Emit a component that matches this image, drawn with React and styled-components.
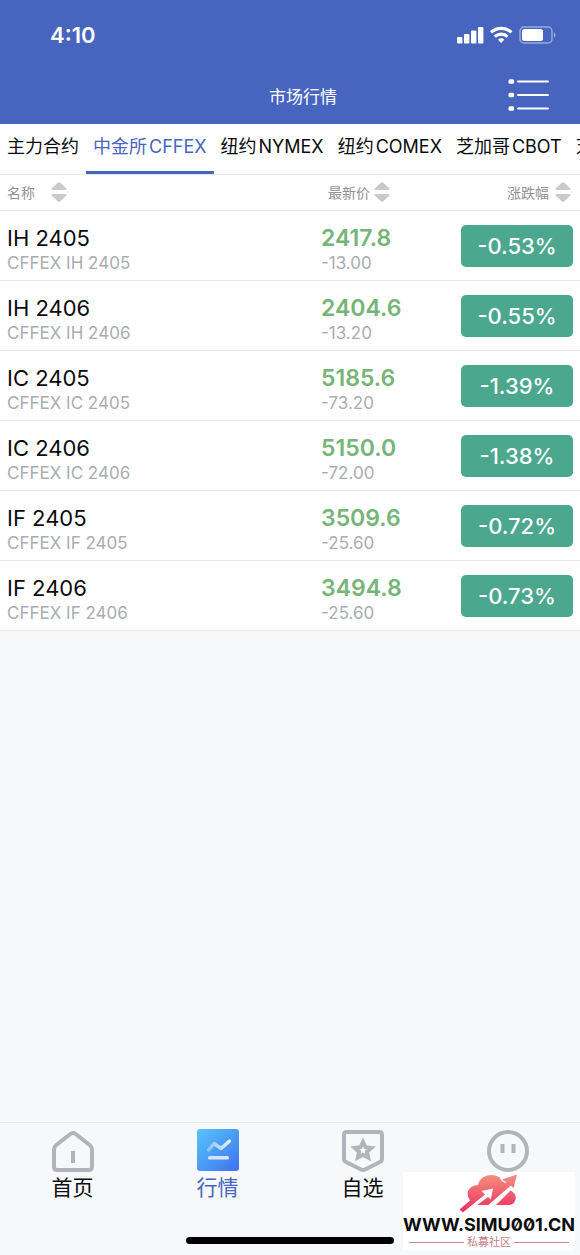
import React, { useState } from 'react'
import styled, { ThemeProvider, createGlobalStyle } from 'styled-components'

const theme = {
  colors: {
    primary: '#4765bf',
    bg: '#f7f8fa',
    white: '#ffffff',
    text: '#0b0b0d',
    muted: '#a9adb3',
    head: '#909196',
    border: '#e6e7e9',
    price: '#76b578',
    badge: '#4ba78d',
    icon: '#b2b4b9',
  },
}

const GlobalStyle = createGlobalStyle`
  * {
    box-sizing: border-box;
  }
  body {
    margin: 0;
    font-family: Inter, "Noto Sans CJK SC", sans-serif;
    color: ${theme.colors.text};
    background-color: ${theme.colors.bg};
  }
  button {
    font-family: inherit;
    color: inherit;
    background: none;
    border: 0;
    padding: 0;
    cursor: pointer;
  }
  a {
    color: inherit;
    text-decoration: none;
  }
`;

const markets = [
  { city: '主力合约' },
  { city: '中金所', code: 'CFFEX' },
  { city: '纽约', code: 'NYMEX' },
  { city: '纽约', code: 'COMEX' },
  { city: '芝加哥', code: 'CBOT' },
  { city: '芝加哥', code: 'CME' },
]

const quotes = [
  { name: 'IH 2405', price: '2417.8', diff: '-13.00', rate: '-0.53%' },
  { name: 'IH 2406', price: '2404.6', diff: '-13.20', rate: '-0.55%' },
  { name: 'IC 2405', price: '5185.6', diff: '-73.20', rate: '-1.39%' },
  { name: 'IC 2406', price: '5150.0', diff: '-72.00', rate: '-1.38%' },
  { name: 'IF 2405', price: '3509.6', diff: '-25.60', rate: '-0.72%' },
  { name: 'IF 2406', price: '3494.8', diff: '-25.60', rate: '-0.73%' },
]

const StatusIcons = () => (
  <svg width="99" height="18" viewBox="0 0 99 18" fill="#fff" aria-hidden="true">
    <rect x="0" y="11" width="5.4" height="6.4" rx="1" />
    <rect x="7" y="8" width="5.4" height="9.4" rx="1" />
    <rect x="14" y="4.5" width="5.4" height="12.900" rx="1" />
    <rect x="21" y="1" width="5.4" height="16.4" rx="1" />
    <g fill="none" stroke="#fff" strokeWidth="3.2">
      <path d="M34 6.4a15 15 0 0 1 20.4 0" />
      <path d="M37.8 10.6a9.4 9.4 0 0 1 12.8 0" />
    </g>
    <path d="M44.2 17l-3.2-3.300a4.800 4.800 0 0 1 6.400 0z" />
    <rect x="63" y="1" width="32" height="16" rx="4" fill="none" stroke="#fff" strokeOpacity="0.45" strokeWidth="1.4" />
    <rect x="65" y="3" width="21" height="12" rx="2.5" />
    <path d="M97 6.5c1.8.8 1.8 4.2 0 5z" fillOpacity="0.5" />
  </svg>
)

const ListIcon = () => (
  <svg width="42" height="34" viewBox="0 0 42 34" fill="#fff" aria-hidden="true">
    {[2, 15.5, 29].map((y) => (
      <g key={y}>
        <rect x="0.5" y={y - 0.7} width="5.6" height="4.4" rx="1.5" />
        <rect x="9" y={y + 0.4} width="32" height="2.2" rx="1" />
      </g>
    ))}
  </svg>
)

const SortIcon = () => (
  <svg width="16" height="20" viewBox="0 0 16 20" fill="#c9cad0" aria-hidden="true">
    <path d="M1.2 8Q-.3 7.4 1 6.2L6.6.8Q8 -.2 9.4.8L15 6.2Q16.300 7.400 14.800 8z" />
    <path d="M1.2 12Q-.3 12.600 1 13.800L6.600 19.200Q8 20.200 9.400 19.200L15 13.800Q16.300 12.600 14.800 12z" />
  </svg>
)

const HomeIcon = () => (
  <svg width="42" height="42" viewBox="0 0 42 42" overflow="visible" fill="none" stroke={theme.colors.icon} strokeWidth="4" aria-hidden="true">
    <path d="M2 20.500Q2 18 4 16.300L18 5.300Q21 2.800 24 5.300L38 16.300Q40 18 40 20.500V38Q40 41 37 41H5Q2 41 2 38z" />
    <path d="M21 22v12" />
  </svg>
)

const ChartIcon = () => (
  <svg width="42" height="42" viewBox="0 0 42 42" aria-hidden="true">
    <defs>
      <linearGradient id="chartBg" x1="0" y1="0" x2="1" y2="1">
        <stop offset="0" stopColor="#58c4f8" />
        <stop offset="0.5" stopColor="#4a9cf5" />
        <stop offset="1" stopColor="#4170ee" />
      </linearGradient>
      <linearGradient id="chartLine" x1="0" y1="0" x2="1" y2="0">
        <stop offset="0" stopColor="#fff" stopOpacity="0.35" />
        <stop offset="1" stopColor="#fff" stopOpacity="0.9" />
      </linearGradient>
    </defs>
    <rect width="42" height="42" rx="3" fill="url(#chartBg)" />
    <path d="M11.500 21L17 14.500L24 19.500L32.500 12" fill="none" stroke="url(#chartLine)" strokeWidth="3.400" strokeLinejoin="round" strokeLinecap="round" />
    <rect x="11" y="27" width="21" height="3.600" rx="1.500" fill="#d3e5fd" />
  </svg>
)

const StarIcon = () => (
  <svg width="42" height="42" viewBox="0 0 42 42" overflow="visible" fill="none" stroke={theme.colors.icon} strokeWidth="4" aria-hidden="true">
    <path d="M5 3H37Q40 3 40 6V30Q40 32 38 33L23 40.500Q21 41.500 19 40.500L4 33Q2 32 2 30V6Q2 3 5 3z" />
    <path d="M21 13l2.500 5.200 5.700.7-4.200 3.900 1.100 5.700-5.100-2.800-5.100 2.800 1.100-5.700-4.200-3.900 5.700-.7z" />
  </svg>
)

const MineIcon = () => (
  <svg width="42" height="42" viewBox="0 0 42 42" overflow="visible" fill="none" stroke={theme.colors.icon} strokeWidth="4" aria-hidden="true">
    <circle cx="21" cy="22" r="19" />
    <path d="M15.500 15v9M26.500 15v9" />
  </svg>
)

const CloudLogo = () => (
  <svg width="60" height="40" viewBox="0 0 60 40" aria-hidden="true">
    <defs>
      <linearGradient id="cloud" gradientUnits="userSpaceOnUse" x1="0" y1="0" x2="0" y2="38">
        <stop offset="0" stopColor="#f4917f" />
        <stop offset="1" stopColor="#ea2f5f" />
      </linearGradient>
    </defs>
    <path
      d="M0.500 35.500L11 26.500Q7.500 22 9 17Q11.500 11.500 19 11Q21.500 1 32 1Q39 1 43 5.500L58 .5L54.500 14L51.500 16.500Q57 20 56.500 25Q55 31 48.500 31H17L4 38.500z"
      fill="url(#cloud)"
    />
    <path d="M22.500 17L34 14.500L31.800 25.500L29 23L17.500 31.500L5 40L3.800 38.500L26 20.500z" fill="#fff" />
    <path d="M27.500 32.500L52 11.500L54.500 14L37.500 32.500z" fill="#fff" />
    <path d="M37 31L51.500 16.500Q57.500 20 56.500 25Q55 31 48.500 31z" fill="url(#cloud)" />
    <path d="M41 4L44.500 7.500L47 8.500" fill="none" stroke="#fff" strokeWidth="1.200" />
  </svg>
)

const tabs = [
  { label: '首页', icon: HomeIcon },
  { label: '行情', icon: ChartIcon },
  { label: '自选', icon: StarIcon },
  { label: '我的', icon: MineIcon },
]

const App = () => {
  const [market, setMarket] = useState(1)

  return (
    <ThemeProvider theme={theme}>
      <GlobalStyle />
      <Page>
        <Header>
          <StatusBar>
            <Clock>4:10</Clock>
            <StatusIcons />
          </StatusBar>
          <TitleBar>
            <Title>市场行情</Title>
            <MenuButton aria-label="菜单">
              <ListIcon />
            </MenuButton>
          </TitleBar>
        </Header>

        <MarketNav>
          {markets.map(({ city, code }, index) => (
            <MarketTab key={index} $active={index === market} onClick={() => setMarket(index)}>
              <span>{city}</span>
              {code && <span>{code}</span>}
            </MarketTab>
          ))}
        </MarketNav>

        <QuoteTable>
          <thead>
            <tr>
              <HeadCell>
                <SortButton $gap="16px">名称<SortIcon /></SortButton>
              </HeadCell>
              <HeadCell $width="24%" $indent>
                <SortButton>最新价<SortIcon /></SortButton>
              </HeadCell>
              <HeadCell $width="21%" $right>
                <SortButton $gap="6px">涨跌幅<SortIcon /></SortButton>
              </HeadCell>
            </tr>
          </thead>
          <tbody>
            {quotes.map((quote) => (
              <tr key={quote.name}>
                <Cell $left="7px">
                  <Name>{quote.name}</Name>
                  <Small>CFFEX {quote.name}</Small>
                </Cell>
                <Cell $left="2px">
                  <Price>{quote.price}</Price>
                  <Small>{quote.diff}</Small>
                </Cell>
                <Cell>
                  <Badge>{quote.rate}</Badge>
                </Cell>
              </tr>
            ))}
          </tbody>
        </QuoteTable>

        <TabBar>
          {tabs.map(({ label, icon: Icon }) => (
            <TabLink key={label} href="#" $active={label === '行情'}>
              <Icon />
              {label}
            </TabLink>
          ))}
          <HomeIndicator />
          <Watermark>
            <CloudLogo />
            <Site>WWW.SIMU001.CN</Site>
            <Slogan>私募社区</Slogan>
          </Watermark>
        </TabBar>
      </Page>
    </ThemeProvider>
  )
};

const Page = styled.div`
  display: flex;
  flex-direction: column;
  min-height: 100vh;
  overflow-x: hidden;
`;

const Header = styled.header`
  color: ${({ theme }) => theme.colors.white};
  background-color: ${({ theme }) => theme.colors.primary};
`;

const StatusBar = styled.div`
  display: flex;
  justify-content: space-between;
  align-items: center;
  height: 70px;
  padding: 0 24px 0 50px;
`;

const Clock = styled.span`
  font-size: 22px;
  font-weight: 600;
`;

const TitleBar = styled.div`
  display: grid;
  grid-template-columns: 1fr auto 1fr;
  align-items: center;
  height: 54px;
  padding: 0 30px 4px 56px;
`;

const Title = styled.h1`
  grid-column: 2;
  margin: 0;
  font-size: 17px;
  font-weight: 400;
`;

const MenuButton = styled.button`
  display: flex;
  justify-self: end;
`;

const MarketNav = styled.nav`
  display: flex;
  height: 51px;
  overflow: hidden;
  background-color: ${({ theme }) => theme.colors.white};
  border-bottom: 1px solid ${({ theme }) => theme.colors.border};
`;

const MarketTab = styled.button`
  display: flex;
  flex-shrink: 0;
  align-items: baseline;
  gap: 2px;
  padding: 0 7px;
  font-size: 18px;
  line-height: 46px;
  white-space: nowrap;
  color: ${({ theme, $active }) => ($active ? theme.colors.primary : theme.colors.text)};
  border-bottom: 3px solid ${({ theme, $active }) => ($active ? theme.colors.primary : 'transparent')};
`;

const QuoteTable = styled.table`
  width: 100%;
  table-layout: fixed;
  border-collapse: separate;
  border-spacing: 0;
  background-color: ${({ theme }) => theme.colors.white};
`;

const HeadCell = styled.th`
  width: ${({ $width }) => $width || 'auto'};
  height: 36px;
  padding: 0 ${({ $right }) => ($right ? '9px' : '0')} 2px ${({ $indent }) => ($indent ? '9px' : '7px')};
  text-align: ${({ $right }) => ($right ? 'right' : 'left')};
  border-bottom: 1px solid ${({ theme }) => theme.colors.border};
`;

const SortButton = styled.button`
  display: inline-flex;
  align-items: center;
  gap: ${({ $gap }) => $gap || '4px'};
  font-size: 14px;
  color: ${({ theme }) => theme.colors.head};
  vertical-align: middle;
`;

const Cell = styled.td`
  height: 70px;
  padding: 1px 7px 0 ${({ $left }) => $left || '0'};
  border-bottom: 1px solid ${({ theme }) => theme.colors.border};
`;

const Name = styled.div`
  padding-top: 7px;
  font-size: 22px;
  line-height: 26px;
`;

const Price = styled(Name)`
  font-size: 23px;
  font-weight: 600;
  color: ${({ theme }) => theme.colors.price};
`;

const Small = styled.div`
  font-size: 17px;
  line-height: 24px;
  color: ${({ theme }) => theme.colors.muted};
`;

const Badge = styled.div`
  width: 112px;
  margin-left: auto;
  font-size: 22px;
  font-weight: 500;
  line-height: 42px;
  text-align: center;
  color: ${({ theme }) => theme.colors.white};
  background-color: ${({ theme }) => theme.colors.badge};
  border-radius: 5px;
`;

const TabBar = styled.nav`
  position: relative;
  display: grid;
  grid-template-columns: repeat(4, 1fr);
  height: 133px;
  margin-top: auto;
  padding-top: 6px;
  border-top: 1px solid ${({ theme }) => theme.colors.border};
`;

const TabLink = styled.a`
  display: flex;
  flex-direction: column;
  align-items: center;
  gap: 2px;
  font-size: 21px;
  line-height: 30px;
  color: ${({ theme, $active }) => ($active ? theme.colors.primary : theme.colors.text)};
`;

const HomeIndicator = styled.div`
  position: absolute;
  bottom: 11px;
  left: 50%;
  width: 208px;
  height: 7px;
  border-radius: 4px;
  background-color: #000;
  transform: translateX(-50%);
`;

const Watermark = styled.div`
  position: absolute;
  right: 5px;
  bottom: 5px;
  display: flex;
  flex-direction: column;
  align-items: center;
  width: 172px;
  height: 78px;
  padding-top: 2px;
  background-color: ${({ theme }) => theme.colors.white};
`;

const Site = styled.div`
  font-size: 18px;
  font-weight: 700;
  font-feature-settings: "zero";
  line-height: 22px;
  white-space: nowrap;
`;

const Slogan = styled.div`
  display: flex;
  align-items: center;
  align-self: stretch;
  gap: 3px;
  padding: 0 6px;
  font-size: 11px;
  line-height: 12px;
  color: #c47d84;

  &::before,
  &::after {
    content: '';
    flex: 1;
    height: 1px;
    background-color: #c9868c;
  }
`;

export default App
